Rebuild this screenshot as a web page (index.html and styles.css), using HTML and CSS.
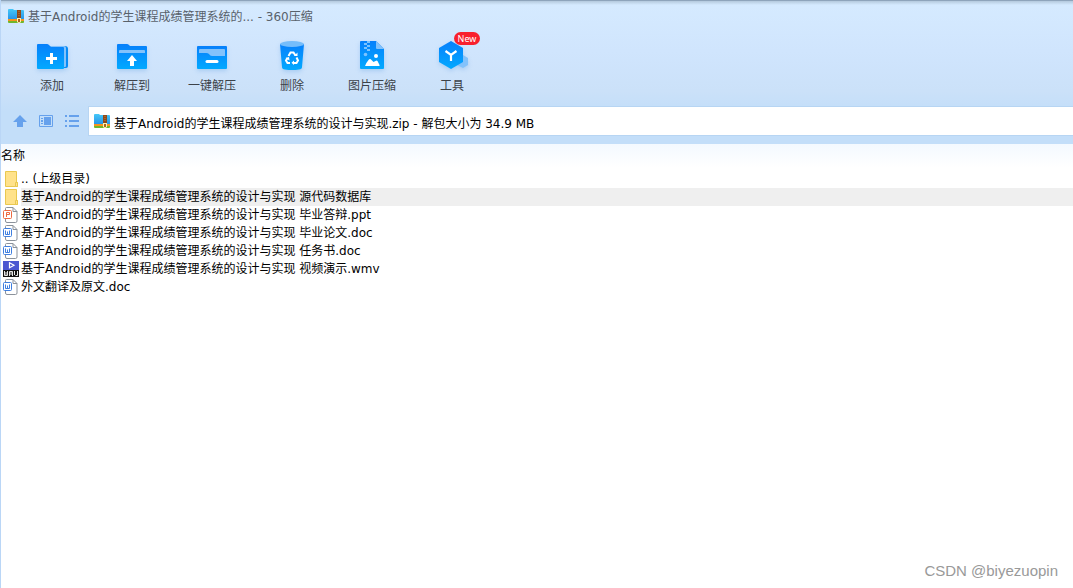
FILE: index.html
```
<!DOCTYPE html>
<html lang="zh-CN">
<head>
<meta charset="utf-8">
<title>360压缩</title>
<link rel="stylesheet" href="styles.css">
</head>
<body>
<svg class="defs" aria-hidden="true">
  <defs>
    <linearGradient id="blue" x1="0" y1="0" x2="0" y2="1"><stop offset="0" stop-color="#0780fb"/><stop offset="1" stop-color="#02a9ff"/></linearGradient>
    <linearGradient id="sky" x1="0" y1="0" x2="0" y2="1"><stop offset="0" stop-color="#45c8f8"/><stop offset="1" stop-color="#2590e8"/></linearGradient>
    <symbol id="archive" viewBox="0 0 16 16">
      <path d="M0 2q0-1 1-1h4l1 1h9q1 0 1 1v9H0z" fill="url(#sky)"/>
      <path d="M0 11h16v2H0z" fill="#f6931d"/><path d="M0 13h16v1q0 1-1 1H1q-1 0-1-1z" fill="#70b62c"/>
      <path d="M9 2h4v8H9z" fill="#8d4a1d"/><path d="M11 3v6" stroke="#c97a35" stroke-dasharray="1 1"/>
      <path d="M9 10h4v4q-2 2-4 0z" fill="#fff0b0"/><path d="M10 11h2v3h-2z" fill="#a86420"/>
    </symbol>
    <symbol id="folder" viewBox="0 0 16 18">
      <path d="M2.500 1.500h11v11h1v4h-12z" fill="#ffe28a" stroke="#e9c84f"/><path d="M12.500 16v-3.500h2v4h-2" fill="#ffe28a" stroke="#e9c84f"/>
    </symbol>
    <symbol id="doc" viewBox="0 0 16 18">
      <path d="M2.500 2.500q0-1 1-1h6.500l4 4v9.500q0 1.500-1.500 1.500h-8.500q-1.500 0-1.500-1.500z" fill="#fff" stroke="#8b929b"/><path d="M10 1.500v4h4" fill="none" stroke="#8b929b"/>
      <rect x="0.500" y="4.500" width="8" height="8" rx="1" fill="#fff" stroke="#3f7fe0"/>
      <path d="M2.500 6.500v4h4V6.500M4.500 7.500v3" fill="none" stroke="#3f7fe0"/>
    </symbol>
    <symbol id="ppt" viewBox="0 0 16 18">
      <path d="M2.500 2.500q0-1 1-1h6.500l4 4v9.500q0 1.500-1.500 1.500h-8.500q-1.500 0-1.500-1.500z" fill="#fff" stroke="#8b929b"/><path d="M10 1.500v4h4" fill="none" stroke="#8b929b"/>
      <rect x="0.500" y="4.500" width="8" height="8" rx="1" fill="#fff" stroke="#ed6a43"/>
      <path d="M3.500 11V6.500h3v2h-3" fill="none" stroke="#ed6a43"/>
    </symbol>
    <symbol id="wmv" viewBox="0 0 16 18">
      <path d="M0 1h16v10H0z" fill="#4a57d1"/><path d="M6.500 2.800v5l4.500-2.500z" fill="none" stroke="#fff" stroke-width="1.200"/>
      <path d="M0 10h16v7H0z" fill="#111"/>
      <path d="M1.500 11v4.500h3V11M3 12v3M6.500 16v-4.500h3V16M8 12v3M11.500 11v4M12.500 15.500h2V11" fill="none" stroke="#fff" stroke-width="0.900"/>
    </symbol>
  </defs>
</svg>
<div class="window">
  <header class="top">
    <div class="title"><svg class="zip" aria-hidden="true"><use href="#archive"/></svg><h1>基于Android的学生课程成绩管理系统的... - 360压缩</h1></div>
    <div class="toolbar" role="toolbar">
      <button class="tool" type="button">
        <svg viewBox="0 0 32 32" aria-hidden="true"><path d="M10 6h19q3 0 3 3v17q0 2-2 2H10z" fill="#078bf5"/><path d="M8 6h20q2 0 2 2v18q0 1-1 1H8z" fill="#83c2fb"/><path d="M1 5q0-1 1-1h9q1 0 2 1l2 2h12q1 0 1 1v20q0 1-1 1H2q-1 0-1-1z" fill="url(#blue)"/><path d="M10 18.500h11M15.500 13v11" stroke="#fff" stroke-width="3"/></svg>
        <span>添加</span></button>
      <button class="tool" type="button">
        <svg viewBox="0 0 32 32" aria-hidden="true"><path d="M1 5q0-1 1-1h9q1 0 2 1l1 1h16q1 0 1 1v21q0 1-1 1H2q-1 0-1-1z" fill="url(#blue)"/><path d="M3 13v-2q0-1 1-1h24q1 0 1 1v2z" fill="#83c2fb"/><path d="M16 15l5 6h-3v5h-4v-5h-3z" fill="#fff"/></svg>
        <span>解压到</span></button>
      <button class="tool" type="button">
        <svg viewBox="0 0 32 32" aria-hidden="true"><rect x="1" y="6" width="30" height="23" rx="1" fill="url(#blue)"/><path d="M3 13v-3q0-1 1-1h24q1 0 1 1v6H16q-2 0-3-2-1-1-3-1z" fill="#83c2fb"/><path d="M11 21.500h10" stroke="#fff" stroke-width="3" stroke-linecap="round"/></svg>
        <span>一键解压</span></button>
      <button class="tool" type="button">
        <svg viewBox="0 0 32 32" aria-hidden="true"><path d="M4 4h24l-2 23q0 2-3 2.500-7 1-14 0Q6 29 6 27z" fill="url(#blue)"/><ellipse cx="16" cy="4" rx="12" ry="3" fill="#75bdfb"/><g fill="none" stroke="#fff" stroke-width="2"><path d="M12.500 16l2-3.500h3l2 3"/><path d="M20.500 17.500l1.500 3-1.500 2.500h-3.500"/><path d="M14 23h-2.500L10 20.500l1.500-2.500"/></g><path d="M18 16h3.500v-3.500zM18 20.500v4.500l-2.500-2.300zM9.500 18l3.500-1 .5 3.500z" fill="#fff"/></svg>
        <span>删除</span></button>
      <button class="tool" type="button">
        <svg viewBox="0 0 32 32" aria-hidden="true"><path d="M4 2q0-1 1-1h15l8 8v19q0 1-1 1H5q-1 0-1-1z" fill="url(#blue)"/><path d="M20 1l8 8h-7q-1 0-1-1z" fill="#83c2fb"/><g fill="#7cc3ff"><path d="M11 1h3v2h-3zM8 3h3v2H8zM11 5h3v2h-3zM8 7h3v2H8zM11 9h3v2h-3z"/><circle cx="9.500" cy="14.500" r="1.800"/></g><circle cx="20" cy="16" r="2" fill="#fff"/><path d="M9 26q1-3 3.500-6 1.500-2 3 0l2 2 2-1q1-1 2 0l2 4v1z" fill="#fff"/></svg>
        <span>图片压缩</span></button>
      <button class="tool" type="button">
        <svg viewBox="0 0 32 32" aria-hidden="true"><path d="M27 15l5 3v7l-5 3-6-3 4-8z" fill="#83c2fb"/><path d="M15 1l12 7v14l-12 7-12-7V8z" fill="url(#blue)"/><path d="M9.500 11l5.500 4 5.500-4M15 15v6" fill="none" stroke="#fff" stroke-width="2.200"/></svg>
        <span>工具</span><span class="badge">New</span></button>
    </div>
    <div class="location">
      <nav class="views">
        <button type="button" aria-label="向上"><svg viewBox="0 0 14 14"><path d="M7 1l7 7h-4v5H4V8H0z" fill="#66a1ec"/></svg></button>
        <button type="button" aria-label="预览"><svg viewBox="0 0 14 14"><path d="M.500 1.500h13v11H.500z" fill="none" stroke="#66a1ec"/><path d="M2 4h2v1H2zM2 6h2v2H2zM2 9h2v1H2zM5 3h7v8H5z" fill="#66a1ec"/></svg></button>
        <button type="button" aria-label="列表"><svg viewBox="0 0 14 14"><path d="M0 2h2M4 2h10M0 7h2M4 7h10M0 12h2M4 12h10" stroke="#66a1ec" stroke-width="2"/></svg></button>
      </nav>
      <div class="address"><svg class="zip" aria-hidden="true"><use href="#archive"/></svg><input type="text" aria-label="路径" value="基于Android的学生课程成绩管理系统的设计与实现.zip - 解包大小为 34.9 MB"></div>
    </div>
  </header>
  <main>
    <table class="files">
      <thead><tr><th scope="col">名称</th></tr></thead>
      <tbody>
        <tr><td><div class="file"><svg><use href="#folder"/></svg><span>.. (上级目录)</span></div></td></tr>
        <tr class="selected"><td><div class="file"><svg><use href="#folder"/></svg><span>基于Android的学生课程成绩管理系统的设计与实现 源代码数据库</span></div></td></tr>
        <tr><td><div class="file"><svg><use href="#ppt"/></svg><span>基于Android的学生课程成绩管理系统的设计与实现 毕业答辩.ppt</span></div></td></tr>
        <tr><td><div class="file"><svg><use href="#doc"/></svg><span>基于Android的学生课程成绩管理系统的设计与实现 毕业论文.doc</span></div></td></tr>
        <tr><td><div class="file"><svg><use href="#doc"/></svg><span>基于Android的学生课程成绩管理系统的设计与实现 任务书.doc</span></div></td></tr>
        <tr><td><div class="file"><svg><use href="#wmv"/></svg><span>基于Android的学生课程成绩管理系统的设计与实现 视频演示.wmv</span></div></td></tr>
        <tr><td><div class="file"><svg><use href="#doc"/></svg><span>外文翻译及原文.doc</span></div></td></tr>
      </tbody>
    </table>
  </main>
  <footer class="watermark">CSDN @biyezuopin</footer>
</div>
</body>
</html>
```
FILE: styles.css
```
* { box-sizing: border-box; }
body {
  margin: 0;
  background: #fff;
  color: #000;
  font: 12px/18px "DejaVu Sans", "Noto Sans CJK SC", sans-serif;
}
button, input { font: inherit; color: inherit; border: 0; padding: 0; background: none; }
svg { display: block; flex: none; }
.defs { position: absolute; width: 0; height: 0; }
.window {
  display: flex;
  flex-direction: column;
  min-height: 100vh;
  border-left: 1px solid #bad6f6;
}
.top {
  padding-bottom: 8px;
  border-top: 1px solid #8ea4bb;
  background: linear-gradient(#b4c9dd 0, #d5eaff 4px, #d0e5fd 50px, #cbe1f9 90px, #c3def9 110px);
}
.title {
  display: flex;
  align-items: center;
  gap: 4px;
  height: 30px;
  padding-left: 7px;
  color: #58616b;
}
.title h1 { margin: 0; padding-top: 2px; font: inherit; }
.zip { width: 16px; height: 16px; }
.toolbar { display: flex; padding: 9px 0 11px 11px; }
.tool {
  position: relative;
  display: flex;
  flex-direction: column;
  align-items: center;
  gap: 5px;
  width: 80px;
  color: #3c4249;
}
.tool svg {
  width: 32px;
  height: 32px;
  overflow: visible;
  filter: drop-shadow(0 2px 2px rgba(60, 140, 220, .25));
}
.badge {
  position: absolute;
  top: -8px;
  left: 42px;
  width: 26px;
  border-radius: 7px;
  background: #f8202d;
  color: #fff;
  font-family: "Noto Sans", sans-serif;
  font-size: 9px;
  line-height: 13px;
  text-align: center;
}
.location { display: flex; align-items: center; }
.views { display: flex; gap: 12px; width: 87px; padding-left: 12px; }
.views svg { width: 14px; height: 14px; }
.address {
  flex: 1;
  display: flex;
  align-items: center;
  gap: 4px;
  height: 30px;
  padding-left: 5px;
  border: 1px solid #b7d5f3;
  border-right: 0;
  background: #fff;
}
.address input { flex: 1; min-width: 0; height: 20px; padding-top: 2px; outline: 0; }
main { flex: 1; background: linear-gradient(#f3f9ff, #fff 24px); }
.files { width: 100%; border-collapse: collapse; }
.files th { height: 26px; padding: 0 0 2px; font-weight: normal; text-align: left; }
.files td { height: 18px; padding: 0; }
.file { display: flex; align-items: center; gap: 2px; padding-left: 2px; }
.file svg { width: 16px; height: 18px; }
.file span { flex: 1; }
.selected span { background: #efefef; }
.watermark {
  padding: 0 15px 5px 0;
  color: #999;
  font: 15px/24px "Liberation Sans", Arial, sans-serif;
  text-align: right;
}
```
